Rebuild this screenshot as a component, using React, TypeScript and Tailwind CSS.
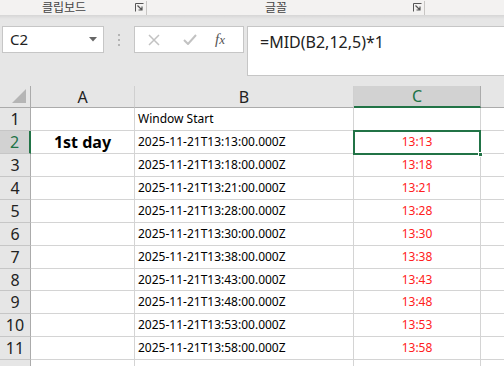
import React from "react";

const times = ["13:13", "13:18", "13:21", "13:28", "13:30", "13:38", "13:43", "13:48", "13:53", "13:58"];
const rowHeights = [23, 23, 23, 23, 23, 23, 23, 22, 23, 23, 23, 23];

const font = { fontFamily: '"Noto Sans", "Noto Sans CJK KR", sans-serif' };

function Launcher() {
  return (
    <svg width="9" height="9" viewBox="0 0 9 9" className="text-[#555]">
      <path d="M0.5 8.5V0.5H8.5" fill="none" stroke="currentColor" strokeWidth="1" />
      <path d="M2.5 2.5L7 7M7 3.5V7H3.5" fill="none" stroke="currentColor" strokeWidth="1.2" />
    </svg>
  );
}

export default function App() {
  return (
    <div className="relative h-[366px] w-[504px] overflow-hidden bg-[#e6e6e6]" style={font}>
      {/* ribbon group labels */}
      <div className="flex h-[15px] items-center bg-[#f3f2f1] text-[12px] leading-[14px] text-[#444]">
        <div className="flex w-[147px] items-center border-r border-[#c8c6c4]">
          <span className="ml-[38px] w-[52px] text-center">클립보드</span>
          <span className="ml-[45px]"><Launcher /></span>
        </div>
        <div className="flex w-[278px] items-center border-r border-[#c8c6c4]">
          <span className="ml-[114px] w-[30px] text-center">글꼴</span>
          <span className="ml-[122px]"><Launcher /></span>
        </div>
      </div>
      <div className="h-[4px] bg-gradient-to-b from-[#d6d6d6] to-[#e6e6e6]" />

      {/* name box + formula bar */}
      <div className="flex h-[67px] items-start pt-[7px]">
        <div className="ml-[2px] flex h-[27px] w-[102px] items-center justify-between border border-[#c6c6c6] bg-white pl-[7px] pr-[6px]">
          <span className="text-[15px] text-[#222]">C2</span>
          <svg width="8" height="5" viewBox="0 0 8 5"><path d="M0 0H8L4 4.5Z" fill="#666" /></svg>
        </div>
        <div className="ml-[14px] mt-[8px] flex flex-col gap-[3px]">
          <span className="block h-[2px] w-[2px] bg-[#b4b4b4]" />
          <span className="block h-[2px] w-[2px] bg-[#b4b4b4]" />
          <span className="block h-[2px] w-[2px] bg-[#b4b4b4]" />
        </div>
        <div className="ml-[14px] flex h-[27px] w-[110px] items-center border border-[#c6c6c6] bg-white">
          <svg className="ml-[13px]" width="12" height="12" viewBox="0 0 12 12">
            <path d="M1 1L11 11M11 1L1 11" stroke="#c2c2c2" strokeWidth="1.5" />
          </svg>
          <svg className="ml-[23px]" width="14" height="11" viewBox="0 0 14 11">
            <path d="M1 6L5 10L13 1" fill="none" stroke="#c2c2c2" strokeWidth="2" />
          </svg>
          <span className="ml-[18px] text-[15px] italic text-[#555]" style={{ fontFamily: '"Liberation Serif", serif' }}>
            f<span className="text-[13px]">x</span>
          </span>
        </div>
        <div className="ml-[3px] flex h-[50px] flex-1 items-start border border-r-0 border-[#c6c6c6] bg-white pl-[12px] pt-[5px]">
          <span className="text-[16px] leading-[20px] text-[#222]">=MID(B2,12,5)*1</span>
        </div>
      </div>

      {/* grid */}
      <div className="relative">
        {/* header row */}
        <div className="flex h-[22px] text-[16px] leading-none text-[#222]">
          <div className="relative w-[31px] border-r border-b border-[#ababab] bg-[#e6e6e6]">
            <svg className="absolute left-[12px] top-[3px]" width="14" height="14" viewBox="0 0 14 14">
              <path d="M14 0V14H0Z" fill="#b5b5b5" />
            </svg>
          </div>
          <div className="flex w-[104px] items-center justify-center border-r border-b border-[#ababab] border-r-[#d0d0d0] bg-[#e6e6e6]">A</div>
          <div className="flex w-[219px] items-center justify-center border-r border-b border-[#ababab] border-r-[#d0d0d0] bg-[#e6e6e6]">B</div>
          <div className="flex w-[127px] items-center justify-center border-r border-b-2 border-r-[#ababab] border-b-[#217346] bg-[#d2d2d2] text-[#217346]">C</div>
          <div className="flex-1 border-b border-[#ababab] bg-[#e6e6e6]" />
        </div>

        {rowHeights.map((h, i) => {
          const r = i + 1;
          const active = r === 2;
          const t = r > 1 && r <= 11 ? times[i - 1] : "";
          return (
            <div key={r} className="flex bg-white" style={{ height: h }}>
              <div
                className={
                  active
                    ? "flex w-[31px] items-center justify-center border-r-2 border-b border-r-[#217346] border-b-[#c6c6c6] bg-[#d2d2d2] text-[16px] text-[#217346]"
                    : "flex w-[31px] items-center justify-center border-r border-b border-r-[#ababab] border-b-[#c6c6c6] bg-[#e6e6e6] text-[16px] text-[#222]"
                }
              >
                {r <= 11 ? r : ""}
              </div>
              <div className="flex w-[104px] items-center justify-center border-r border-b border-[#d4d4d4] text-[16px] font-bold text-black">
                {r === 2 ? "1st day" : ""}
              </div>
              <div className="flex w-[219px] items-center border-r border-b border-[#d4d4d4] pl-[3px] text-[12px] text-black">
                {r === 1 ? "Window Start" : t ? `2025-11-21T${t}:00.000Z` : ""}
              </div>
              <div className="flex w-[127px] items-center justify-center border-r border-b border-[#d4d4d4] text-[12px] text-[#ff2020]">
                {t}
              </div>
              <div className="flex-1 border-b border-[#d4d4d4]" />
            </div>
          );
        })}

        {/* selection */}
        <div className="absolute left-[353px] top-[44px] h-[25px] w-[128px] border-2 border-[#217346]" />
        <div className="absolute left-[478px] top-[66px] h-[5px] w-[5px] border border-white bg-[#217346]" />
      </div>
    </div>
  );
}
